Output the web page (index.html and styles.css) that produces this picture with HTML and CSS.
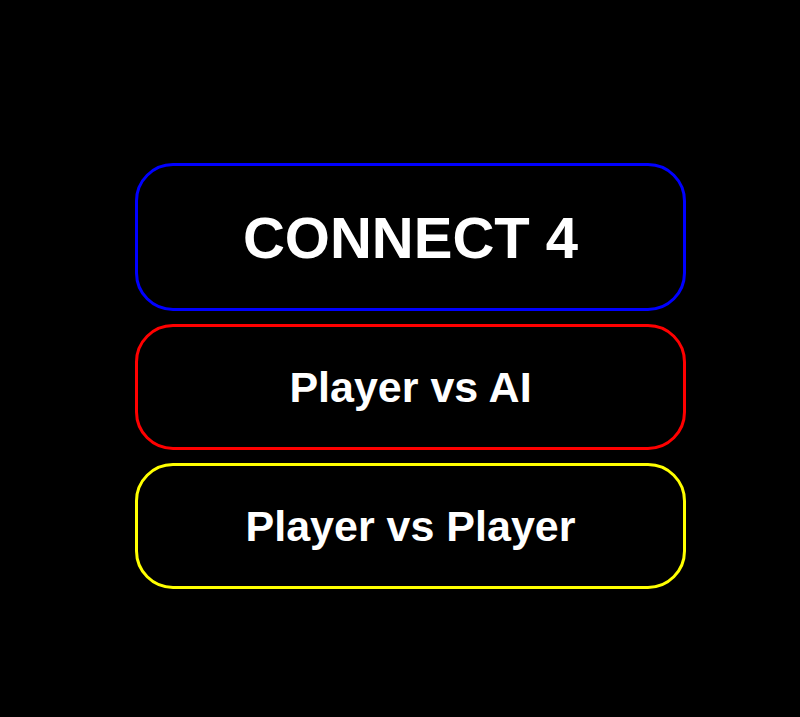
FILE: index.html
```html
<!DOCTYPE html>
<html>
<head>
<meta charset="utf-8">
<link rel="stylesheet" href="styles.css">
</head>
<body>
<div class="menu">
  <div class="box title">CONNECT 4</div>
  <div class="box btn red">Player vs AI</div>
  <div class="box btn yellow">Player vs Player</div>
</div>
</body>
</html>
```
FILE: styles.css
```css
html, body {
  margin: 0;
  padding: 0;
  background: #000;
  height: 100%;
  overflow: hidden;
}
body {
  font-family: "Liberation Sans", Arial, sans-serif;
  color: #fff;
}
.menu {
  margin-left: 135px;
  padding-top: 163px;
  width: 551px;
  display: flex;
  flex-direction: column;
  gap: 13px;
}
.box {
  box-sizing: border-box;
  border: 3px solid;
  border-radius: 38px;
  display: flex;
  align-items: center;
  justify-content: center;
  font-weight: bold;
}
.title {
  height: 148px;
  border-color: #0000ff;
  font-size: 58px;
}
.btn {
  font-size: 43px;
}
.red {
  height: 126px;
  border-color: #ff0000;
}
.yellow {
  height: 126px;
  border-color: #ffff00;
}
```
